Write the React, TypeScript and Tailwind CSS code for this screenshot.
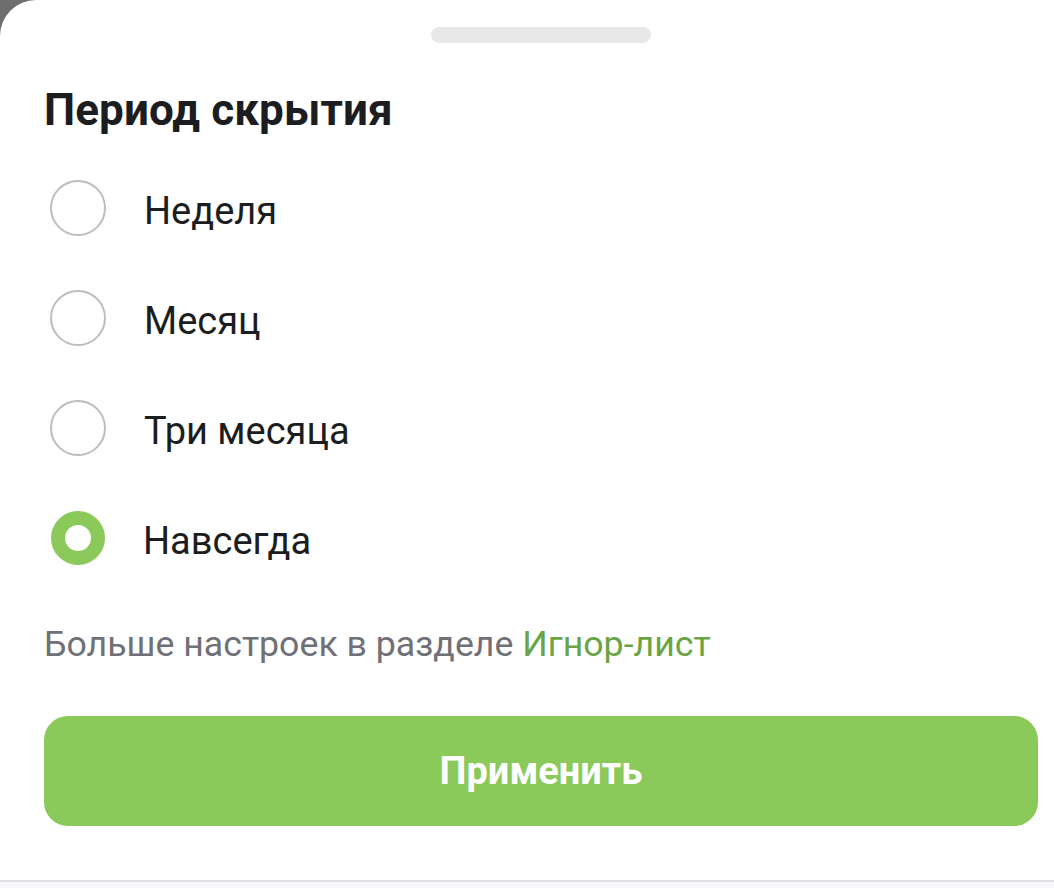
import { useState } from 'react';

const OPTIONS = ['Неделя', 'Месяц', 'Три месяца', 'Навсегда'];

export default function App() {
  const [selected, setSelected] = useState('Навсегда');

  return (
    <div className="flex h-[888px] w-[1054px] flex-col overflow-hidden bg-[#6e6e6e] font-['Roboto',sans-serif]">
      <div className="flex w-[1082px] flex-1 flex-col rounded-tl-[36px] bg-white px-[44px]">
        <div className="flex justify-center pt-[27px]">
          <div className="h-[16px] w-[220px] rounded-full bg-[#e8e8e8]" />
        </div>

        <h1 className="mt-[39px] text-[44px] font-bold leading-[56px] tracking-[0.1px] text-[#1c1d21]">
          Период скрытия
        </h1>

        <div className="mt-[15px] flex flex-col">
          {OPTIONS.map((o) => (
            <Radio key={o} label={o} checked={selected === o} onSelect={() => setSelected(o)} />
          ))}
        </div>

        <p className="mt-[27px] text-[35.7px] leading-[48px] text-[#6f7177]">
          Больше настроек в разделе <span className="text-[#6aa445]">Игнор-лист</span>
        </p>

        <button
          type="button"
          className="mt-[48px] h-[110px] w-full rounded-[24px] bg-[#8cc95b] text-[38px] font-bold text-white"
        >
          Применить
        </button>
      </div>
      <div className="h-[2px] bg-[#e0e1e8]" />
      <div className="h-[6px] bg-[#f6f6fb]" />
    </div>
  );
}

function Radio({ label, checked, onSelect }: { label: string; checked: boolean; onSelect: () => void }) {
  return (
    <button type="button" onClick={onSelect} className="flex h-[110px] items-center text-left">
      <span
        className={
          checked
            ? 'ml-[7px] h-[54px] w-[54px] rounded-full border-[14px] border-[#8cc95b] bg-white'
            : 'ml-[6px] h-[56px] w-[56px] rounded-full border-2 border-[#bdbdbd] bg-white'
        }
      />
      <span className="ml-[38px] pt-[5px] text-[38px] leading-[48px] text-[#1c1d21]">{label}</span>
    </button>
  );
}
